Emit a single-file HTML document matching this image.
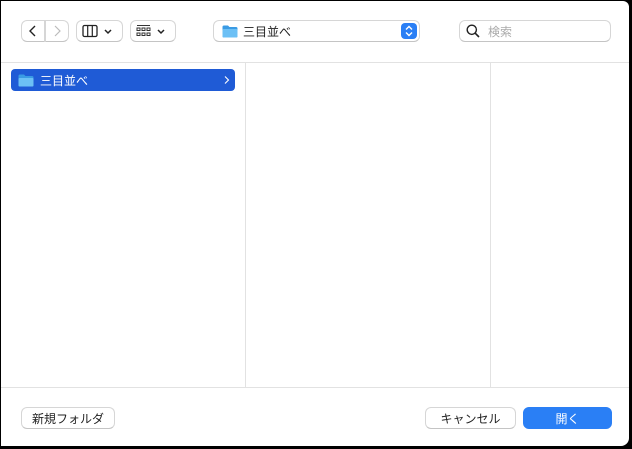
<html><head><style>
body{margin:0;width:632px;height:449px;background:#000;position:relative;overflow:hidden;font-family:"Liberation Sans","Noto Sans CJK JP",sans-serif;}
.win{position:absolute;left:1px;top:1px;width:628px;height:445px;background:#fff;border-radius:0 6px 8px 0;overflow:hidden}
.b{position:absolute;background:#fff;border:1px solid #d6d6d6;border-bottom-color:#c4c4c4;border-radius:6px;box-sizing:border-box;font-size:12px;color:#222;display:flex;align-items:center;justify-content:center}
.ln{position:absolute;background:#e2e2e2}
</style></head><body><div class="win">
<div class="b" style="left:20px;top:19px;width:24px;height:22px;border-radius:6px 0 0 6px"><svg width="10" height="12"><path d="M7 1L2 6L7 11" stroke="#222" stroke-width="1.4" fill="none"/></svg></div>
<div class="b" style="left:44px;top:19px;width:24px;height:22px;border-radius:0 6px 6px 0"><svg width="10" height="12"><path d="M3 1L8 6L3 11" stroke="#bbb" stroke-width="1.2" fill="none"/></svg></div>
<div class="b" style="left:75px;top:19px;width:47px;height:22px"><svg width="36" height="14"><rect x="1" y="1.5" width="14" height="11" rx="1.5" fill="none" stroke="#222" stroke-width="1.3"/><path d="M5.7 2V12M10.3 2V12" stroke="#222" stroke-width="1.2"/><path d="M23 6L26 9L29 6" stroke="#222" stroke-width="1.5" fill="none"/></svg></div>
<div class="b" style="left:129px;top:19px;width:46px;height:22px"><svg width="36" height="14"><g fill="none" stroke="#333" stroke-width="1"><path d="M2 1.5H15"/><rect x="2" y="4" width="3" height="2.5"/><rect x="7" y="4" width="3" height="2.5"/><rect x="12" y="4" width="3" height="2.5"/><rect x="2" y="9" width="3" height="2.5"/><rect x="7" y="9" width="3" height="2.5"/><rect x="12" y="9" width="3" height="2.5"/></g><path d="M23 6L26 9L29 6" stroke="#222" stroke-width="1.5" fill="none"/></svg></div>
<div class="b" style="left:212px;top:19px;width:207px;height:22px;justify-content:flex-start;padding-left:8px"><svg width="16" height="13" style="margin-right:5px"><path d="M0.5 2Q0.5 0.5 2 0.5H6L7.5 2H14Q15.5 2 15.5 3.5V11Q15.5 12.5 14 12.5H2Q0.5 12.5 0.5 11Z" fill="#3a9be4"/><rect x="0.5" y="4" width="15" height="8.5" rx="1" fill="#6cc0f5"/></svg>三目並べ<div style="position:absolute;right:2px;top:2px;width:16px;height:16px;background:#2a7ff5;border-radius:4px"><svg width="16" height="16"><path d="M5 6.5L8 3.5L11 6.5M5 9.5L8 12.5L11 9.5" stroke="#fff" stroke-width="1.4" fill="none"/></svg></div></div>
<div class="b" style="left:458px;top:19px;width:152px;height:22px;justify-content:flex-start;padding-left:6px;color:#aaa"><svg width="14" height="14" style="margin-right:8px"><circle cx="5.8" cy="5.8" r="4.6" fill="none" stroke="#222" stroke-width="1.4"/><path d="M9.2 9.2L13 13" stroke="#222" stroke-width="1.6"/></svg>検索</div>
<div class="ln" style="left:0;top:61px;width:628px;height:1px"></div>
<div class="ln" style="left:244px;top:62px;width:1px;height:324px"></div>
<div class="ln" style="left:489px;top:62px;width:1px;height:324px"></div>
<div class="ln" style="left:0;top:386px;width:628px;height:1px"></div>
<div style="position:absolute;left:10px;top:68px;width:224px;height:22px;background:#1f5bd6;border-radius:4px;color:#fff;font-size:12px;display:flex;align-items:center;padding-left:7px;box-sizing:border-box"><svg width="16" height="13" style="margin-right:6px"><path d="M0.5 2Q0.5 0.5 2 0.5H6L7.5 2H14Q15.5 2 15.5 3.5V11Q15.5 12.5 14 12.5H2Q0.5 12.5 0.5 11Z" fill="#3a9be4"/><rect x="0.5" y="4" width="15" height="8.5" rx="1" fill="#6cc0f5"/></svg>三目並べ<svg width="6" height="8" style="position:absolute;right:5px;top:7px"><path d="M1 0.5L4.5 4L1 7.5" stroke="#fff" stroke-width="1.1" fill="none"/></svg></div>
<div class="b" style="left:20px;top:406px;width:94px;height:22px">新規フォルダ</div>
<div class="b" style="left:424px;top:406px;width:91px;height:22px">キャンセル</div>
<div class="b" style="left:522px;top:406px;width:89px;height:22px;background:#2a7ff5;border-color:#2a7ff5;color:#fff">開く</div>
</div></body></html>
